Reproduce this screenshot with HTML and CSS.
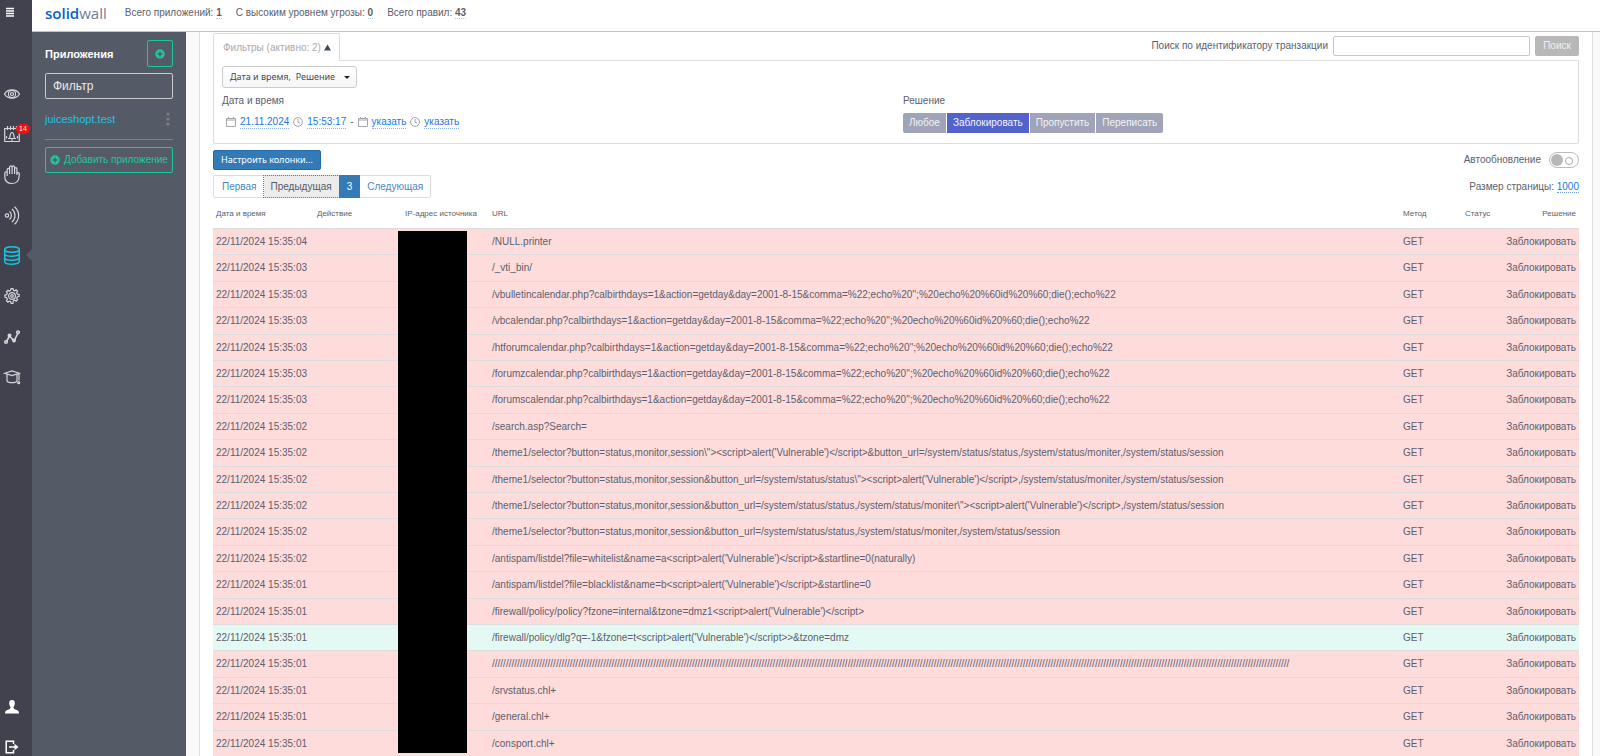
FILE: index.html
```html
<!DOCTYPE html>
<html lang="ru">
<head>
<meta charset="utf-8">
<title>SolidWall</title>
<link rel="stylesheet" href="styles.css">
</head>
<body>
<div class="app">
  <nav class="rail" aria-label="Разделы">
    <button class="rail-item burger" aria-label="Меню"><svg width="10" height="10" viewBox="0 0 10 10"><path d="M1 1.500h8M1 4h8M1 6.500h8M1 9h8" stroke="#fff" stroke-width="1.400"/></svg></button>
    <div class="rail-main">
      <a class="rail-item" href="#" aria-label="Обзор"><svg class="ico" viewBox="0 0 16 16"><path d="M.5 8C3.500 2.500 12.500 2.500 15.500 8 12.500 13.500 3.500 13.500.500 8z"/><circle cx="8" cy="8" r="3.600"/><circle cx="8" cy="8" r="1.500"/></svg></a>
      <a class="rail-item" href="#" aria-label="Уведомления"><svg class="ico" viewBox="0 0 16 16"><path d="M.7 2.500h14.600v13H.7zM3.500 0v4M6.500 0v4M9.500 0v4M12.500 0v4M4 12.500h8M5.500 12.500c.8-2 .3-6 2.500-6s1.700 4 2.500 6M7 14h2M2.500 10v2.500M13.500 10v2.500"/></svg><span class="count">14</span></a>
      <a class="rail-item" href="#" aria-label="Блокировки"><svg class="ico tall" viewBox="0 0 16 19"><path d="M3.200 11V4.500c0-1.600 2.400-1.600 2.400 0V9M5.600 8V2.200c0-1.900 2.500-1.900 2.500 0V9M8.100 3c0-2.800 2.500-2.500 2.500-.5V9M10.600 4c0-1.800 2.300-1.800 2.300 0v6l.2-1.500c.4-1.500 2.300-1 2.200.5L15 12.500c-.5 4-3 6-7 6-4.500 0-7.200-2.500-7.200-6.500V8c0-1.500 2.400-1.500 2.400 0"/></svg></a>
      <a class="rail-item" href="#" aria-label="Сигналы"><svg class="ico tall" viewBox="0 0 16 19"><circle cx="3" cy="9.500" r="1.700"/><path d="M5.500 5.500c2.500 2 2.500 6 0 8M8 3c4 3.500 4 9.500 0 13M10.500.7c5.500 5 5.500 12.600 0 17.600"/></svg></a>
      <a class="rail-item current" href="#" aria-label="Данные"><svg class="ico tall" viewBox="0 0 16 19"><ellipse cx="8" cy="3.500" rx="7.300" ry="2.800"/><path d="M.7 3.500v12c0 3.700 14.600 3.700 14.600 0v-12M.7 7.500c0 3.700 14.600 3.700 14.600 0M.7 11.500c0 3.700 14.600 3.700 14.600 0"/></svg></a>
      <a class="rail-item" href="#" aria-label="Настройки"><svg class="ico" viewBox="0 0 16 16"><path d="M6.700 2.200 7 .7h2l.3 1.500 1.500.6 1.300-.9 1.500 1.500-.9 1.300.6 1.500 1.800.3v2l-1.800.3-.6 1.500.9 1.300-1.500 1.500-1.300-.9-1.500.6L9 15.300H7l-.3-1.500-1.500-.6-1.300.9-1.500-1.500.9-1.300-.6-1.500L.9 9V7l1.800-.3.6-1.500-.9-1.300 1.500-1.500 1.300.9z"/><circle cx="8" cy="8" r="3.400"/><circle cx="8" cy="8" r="1.300"/></svg></a>
      <a class="rail-item" href="#" aria-label="Графики"><svg class="ico" viewBox="0 0 16 16"><g stroke-width="1.600"><path d="M2.500 12.500 5.500 7l4.500 5L14 4"/><circle cx="2" cy="13" r="1.300"/><circle cx="5.500" cy="6.500" r="1.200"/><circle cx="10" cy="11.500" r="1.200"/><circle cx="14" cy="3.300" r="1.300"/></g></svg></a>
      <a class="rail-item" href="#" aria-label="Обучение"><svg class="ico" viewBox="0 0 16 16"><path d="M.7 4.300 8 2l7.300 2.300L8 6.600zM3 5.500V12c1 2.200 9 2.200 10 0V5.500M15 4.500v7"/><circle cx="14.700" cy="13.700" r="1"/></svg></a>
    </div>
    <div class="rail-foot">
      <a class="rail-item" href="#" aria-label="Профиль"><svg width="14" height="14" viewBox="0 0 14 14"><path fill="#fff" d="M7 0c2.200 0 3 1.600 2.800 3.500C9.600 5.500 9 6.500 8.500 7c0 1.800.5 2 2.500 2.700 2 .7 3 1.300 3 3.800H0c0-2.500 1-3.100 3-3.800C5 9 5.500 8.800 5.500 7 5 6.500 4.400 5.500 4.200 3.500 4 1.600 4.800 0 7 0z"/></svg></a>
      <a class="rail-item" href="#" aria-label="Выход"><svg width="14" height="14" viewBox="0 0 14 14"><path fill="none" stroke="#fff" stroke-width="1.500" d="M8.500 4V1.200H1.200v11.600h7.300V10"/><path fill="#fff" d="M4 6.200h5.500V3.700L13.500 7l-4 3.300V7.800H4z"/></svg></a>
    </div>
  </nav>
  <div class="shell">
    <header class="topbar">
      <a class="logo" href="#"><b>solid</b>wall</a>
      <span>Всего приложений: <b class="num">1</b></span>
      <span>С высоким уровнем угрозы: <b class="num">0</b></span>
      <span>Всего правил: <b class="num">43</b></span>
    </header>
    <div class="body">
      <aside class="apps">
        <div class="apps-head"><h2>Приложения</h2><button class="add-small" aria-label="Добавить"><svg width="10" height="10" viewBox="0 0 10 10"><circle cx="5" cy="5" r="4.700" fill="#1cc8a0"/><path d="M5 2.500v5M2.500 5h5" stroke="#555b66" stroke-width="1.500"/></svg></button></div>
        <input class="apps-filter" type="text" placeholder="Фильтр" aria-label="Фильтр">
        <div class="app-row"><a href="#">juiceshopt.test</a><button class="dots" aria-label="Ещё"><svg width="4" height="14" viewBox="0 0 4 14"><g fill="#7d828c"><circle cx="2" cy="2" r="1.600"/><circle cx="2" cy="7" r="1.600"/><circle cx="2" cy="12" r="1.600"/></g></svg></button></div>
        <button class="add-app"><svg width="10" height="10" viewBox="0 0 10 10"><circle cx="5" cy="5" r="4.700" fill="#1cc8a0"/><path d="M5 2.500v5M2.500 5h5" stroke="#555b66" stroke-width="1.500"/></svg>Добавить приложение</button>
      </aside>
      <main class="content">
        <div class="panel">
          <div class="tabs">
            <button class="tab">Фильтры (активно: 2) <svg width="7" height="7" viewBox="0 0 8 7"><path d="M4 0l4 7H0z" fill="#444a55"/></svg></button>
            <form class="search"><label for="tx">Поиск по идентификатору транзакции</label><input id="tx" type="text"><button type="button">Поиск</button></form>
          </div>
          <section class="filters">
            <button class="picker">Дата и время,&nbsp; Решение <i class="caret"></i></button>
            <div class="filter-cols">
              <div><h3>Дата и время</h3>
                <div class="range">
                  <svg class="cal" viewBox="0 0 10 10"><path d="M.5 1.500h9v8h-9zM.5 3h9M2.500 0v2M7.500 0v2"/></svg><a href="#">21.11.2024</a>
                  <svg class="cal" viewBox="0 0 10 10"><circle cx="5" cy="5" r="4.400"/><path d="M5 2v3.300l2 .7"/></svg><a href="#">15:53:17</a>
                  <span>-</span>
                  <svg class="cal" viewBox="0 0 10 10"><path d="M.5 1.500h9v8h-9zM.5 3h9M2.500 0v2M7.500 0v2"/></svg><a href="#">указать</a>
                  <svg class="cal" viewBox="0 0 10 10"><circle cx="5" cy="5" r="4.400"/><path d="M5 2v3.300l2 .7"/></svg><a href="#">указать</a>
                </div></div>
              <div><h3>Решение</h3>
                <div class="choice"><button>Любое</button><button class="on">Заблокировать</button><button>Пропустить</button><button>Переписать</button></div></div>
            </div>
          </section>
          <div class="line tools"><button class="columns">Настроить колонки...</button><label class="auto">Автообновление <input type="checkbox" role="switch"></label></div>
          <div class="line paging">
            <div class="pager"><a href="#">Первая</a><a class="focus" href="#">Предыдущая</a><a class="page" href="#">3</a><a href="#">Следующая</a></div>
            <span class="size">Размер страницы: <a href="#">1000</a></span>
          </div>
          <div class="log">
            <table>
              <colgroup><col class="c-date"><col class="c-act"><col class="c-ip"><col><col class="c-met"><col class="c-stat"><col class="c-res"></colgroup>
              <thead><tr><th>Дата и время</th><th>Действие</th><th>IP-адрес источника</th><th>URL</th><th>Метод</th><th>Статус</th><th class="r">Решение</th></tr></thead>
              <tbody id="rows"></tbody>
            </table>
            <div class="mask"></div>
          </div>
        </div>
      </main>
    </div>
  </div>
</div>
<script src="rows.js"></script>
</body>
</html>
```
FILE: styles.css
```css
* { box-sizing: border-box; }
body { margin: 0; font: 10px/14px "Liberation Sans", Arial, sans-serif; color: #5c606c; background: #fff; }
button, input { font: inherit; margin: 0; }
button { cursor: pointer; white-space: nowrap; }
a { text-decoration: none; color: #2277e6; }
h2, h3 { margin: 0; }
.app { display: flex; height: 100vh; overflow: hidden; }

.rail { width: 32px; flex: none; background: #42424e; display: flex; flex-direction: column; }
.rail-item { position: relative; display: flex; align-items: center; height: 41px; padding: 0 4px; background: none; border: 0; }
.burger { height: 24px; padding: 0 5px; }
.rail-main { margin-top: 49px; }
.rail-main .rail-item:nth-child(even) { height: 40px; }
.ico { width: 16px; height: 16px; fill: none; stroke: #d4d5d8; stroke-width: 1.2; overflow: visible; }
.ico.tall { height: 19px; }
.current .ico { stroke: #16c4e0; stroke-width: 1.5; }
.current::after { content: ""; position: absolute; right: 0; top: 14px; border: 6px solid transparent; border-left: 0; border-right-color: #555b66; }
.count { position: absolute; left: 16px; top: 10px; width: 14px; height: 10px; border-radius: 5px; background: #f01010; color: #fff; font-size: 7px; line-height: 10px; text-align: center; }
.rail-foot { margin-top: auto; margin-bottom: -11px; }
.rail-foot .rail-item { height: 40px; padding: 0 5px; }

.shell { flex: 1; min-width: 0; display: flex; flex-direction: column; }
.topbar { display: flex; flex: none; gap: 14px; height: 32px; padding: 0 13px 5px; align-items: center; background: #fff; border-bottom: 1px solid #bfc3c6; }
.logo { font: 15px/18px "Open Sans", sans-serif; color: #6b7f9b; margin-right: 4px; }
.logo b { font-weight: 600; color: #0a5fd0; }
.num { border-bottom: 1px dotted #b4c6f5; }

.body { flex: 1; min-height: 0; display: flex; }
.apps { width: 154px; flex: none; background: #555b66; padding: 8px 13px; }
.apps-head { display: flex; justify-content: space-between; align-items: center; margin-bottom: 6px; }
.apps-head h2 { color: #fff; font-size: 11px; }
.add-small { width: 26px; height: 27px; padding: 0; background: none; border: 1px solid #1cc8a0; border-radius: 2px; display: grid; place-items: center; }
.apps-filter { display: block; width: 100%; height: 26px; padding: 0 7px; background: none; border: 1px solid #c8cace; border-radius: 2px; color: #fff; font-size: 12px; }
.apps-filter::placeholder { color: #e8e8ea; opacity: 1; }
.app-row { display: flex; align-items: center; justify-content: space-between; height: 41px; border-bottom: 1px solid #7d828c; margin-bottom: 7px; }
.app-row a { color: #18c5e4; font-size: 11px; }
.dots { background: none; border: 0; padding: 0 3px; display: flex; }
.add-app { display: flex; align-items: center; justify-content: center; gap: 4px; width: 100%; height: 26px; padding: 0; background: none; border: 1px solid #1cc8a0; border-radius: 2px; color: #1cc8a0; }

.content { flex: 1; min-width: 0; padding: 0 7px 0 13px; background: #f9f9f9; overflow: hidden; }
.panel { background: #fff; border: solid #e0e0e0; border-width: 0 1px; padding: 1px 13px 0; min-height: 100%; }
.tabs { display: flex; justify-content: space-between; align-items: flex-start; }
.tab { height: 28px; margin-bottom: -1px; padding: 0 8px 0 9px; background: #fff; border: 1px solid #ddd; border-bottom: 0; border-radius: 2px 2px 0 0; color: #a8aaae; position: relative; }
.search { display: flex; align-items: center; gap: 5px; padding-top: 3px; }
.search input { width: 197px; height: 20px; border: 1px solid #c8c8c8; border-radius: 2px; padding: 0 5px; }
.search button { height: 20px; width: 44px; padding: 0; border: 0; border-radius: 2px; background: #b8b8b8; color: #f0f0f0; }
.filters { border: 1px solid #ddd; border-radius: 0 0 2px 2px; padding: 5px 8px 9px; height: 84px; }
.picker { display: flex; align-items: center; height: 22px; padding: 0 6px 0 7px; border: 1px solid #ccc; border-radius: 3px; background: linear-gradient(#fff, #f6f6f6); font-family: "Noto Sans", sans-serif; font-size: 9px; color: #444a55; }
.caret { margin-left: 9px; border: 3px solid transparent; border-top-color: #222; border-bottom: 0; }
.filter-cols { display: grid; grid-template-columns: 1fr 1fr; gap: 14px; padding-top: 6px; }
.filter-cols h3 { font-size: 10px; font-weight: 400; line-height: 14px; margin-bottom: 5px; }
.range { display: flex; align-items: center; gap: 4px; padding: 2px 4px; }
.range a { border-bottom: 1px dotted #8fb2f0; line-height: 13px; }
.cal { width: 10px; height: 10px; fill: none; stroke: #a4a6aa; }
.choice { display: flex; gap: 1px; }
.choice button { height: 20px; padding: 0 6px; border: 0; background: #9fa4b8; color: #f2f3f6; }
.choice button:first-child { border-radius: 2px 0 0 2px; }
.choice button:last-child { border-radius: 0 2px 2px 0; }
.choice .on { background: #5264cc; }

.line { display: flex; justify-content: space-between; align-items: center; }
.tools { margin-top: 6px; }
.columns { height: 20px; padding: 0 7px; border: 1px solid #1f69a8; border-radius: 2px; background: #337ab7; color: #fff; font-family: "Noto Sans", sans-serif; font-size: 9px; line-height: 16px; }
.auto { display: flex; align-items: center; gap: 8px; }
.auto input { appearance: none; position: relative; width: 30px; height: 16px; margin: 0; border: 1px solid #bbb; border-radius: 8px; }
.auto input::before { content: ""; position: absolute; left: 1px; top: 1px; width: 12px; height: 12px; border-radius: 50%; background: #b8b8b8; }
.auto input::after { content: ""; position: absolute; right: 5px; top: 4px; width: 6px; height: 6px; border: 1px solid #aaa; border-radius: 50%; }
.paging { margin-top: 5px; }
.pager { display: flex; height: 23px; border: 1px solid #ddd; border-radius: 2px; }
.pager a { padding: 0 7px; line-height: 21px; color: #4a88be; }
.pager a:first-child { padding-left: 8px; }
.pager .focus { background: #ececec; color: #555a66; outline: 1px dotted #777; }
.pager .page { padding: 0 8px; background: #337ab7; color: #fff; margin: -1px 0; line-height: 23px; position: relative; }
.size a { border-bottom: 1px dotted #6f9de0; }

.log { position: relative; }
table { width: 100%; border-collapse: collapse; table-layout: fixed; }
.c-date { width: 101px; } .c-act { width: 88px; } .c-ip { width: 87px; }
.c-met { width: 62px; } .c-stat { width: 41px; } .c-res { width: 76px; }
th { height: 30px; padding: 3px 3px 0; font-size: 8px; font-weight: 400; text-align: left; white-space: nowrap; }
td { height: 26px; padding: 1px 3px 0; border-top: 1px solid #dcdcdc; background: #fedcdc; white-space: nowrap; }
tbody tr:nth-child(5n+2) td, tbody tr:nth-child(5n+4) td { height: 27px; }
tbody .ok td { background: #e4f9f4; }
.r { text-align: right; }
.mask { position: absolute; left: 185px; top: 33px; width: 69px; height: 522px; background: #000; }
```
FILE: rows.js
```js
const theme = "/theme1/selector?button=status,monitor,session";
const tail = "calendar.php?calbirthdays=1&action=getday&day=2001-8-15&comma=%22;echo%20'';%20echo%20%60id%20%60;die();echo%22";
const alertTag = "<script>alert('Vulnerable')<\/script>";
const rows = [
  ["04", "/NULL.printer"],
  ["03", "/_vti_bin/"],
  ["03", "/vbulletin" + tail],
  ["03", "/vb" + tail],
  ["03", "/htforum" + tail],
  ["03", "/forumz" + tail],
  ["03", "/forums" + tail],
  ["02", "/search.asp?Search="],
  ["02", theme + "\\\">" + alertTag + "&button_url=/system/status/status,/system/status/moniter,/system/status/session"],
  ["02", theme + "&button_url=/system/status/status\\\">" + alertTag + ",/system/status/moniter,/system/status/session"],
  ["02", theme + "&button_url=/system/status/status,/system/status/moniter\\\">" + alertTag + ",/system/status/session"],
  ["02", theme + "&button_url=/system/status/status,/system/status/moniter,/system/status/session"],
  ["02", "/antispam/listdel?file=whitelist&name=a" + alertTag + "&startline=0(naturally)"],
  ["01", "/antispam/listdel?file=blacklist&name=b" + alertTag + "&startline=0"],
  ["01", "/firewall/policy/policy?fzone=internal&tzone=dmz1" + alertTag],
  ["01", "/firewall/policy/dlg?q=-1&fzone=t" + alertTag + ">&tzone=dmz", "ok"],
  ["01", "/".repeat(287)],
  ["01", "/srvstatus.chl+"],
  ["01", "/general.chl+"],
  ["01", "/consport.chl+"]
];
const body = document.getElementById("rows");
for (const [sec, url, cls] of rows) {
  const tr = body.insertRow();
  if (cls) tr.className = cls;
  for (const text of ["22/11/2024 15:35:" + sec, "", "", url, "GET", "", "Заблокировать"]) {
    tr.insertCell().textContent = text;
  }
  tr.lastChild.className = "r";
}
```
